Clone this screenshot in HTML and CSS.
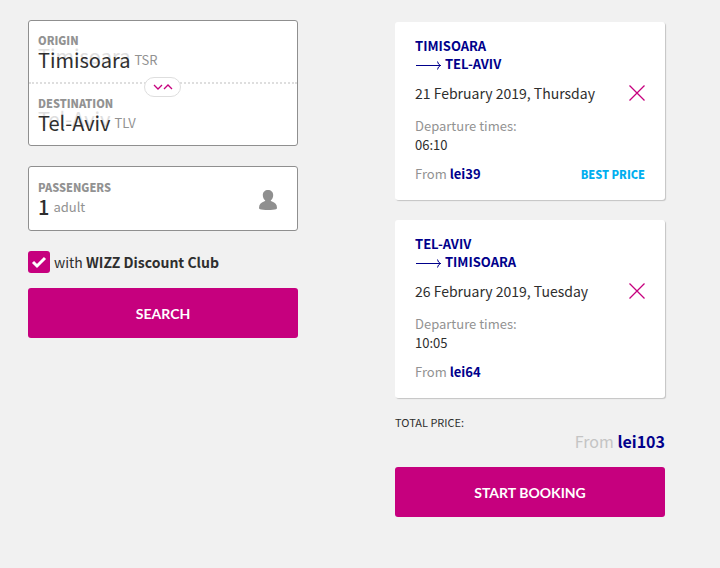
FILE: index.html
```html
<!DOCTYPE html>
<html lang="en">
<head>
<meta charset="utf-8">
<meta name="viewport" content="width=device-width, initial-scale=1">
<title>Flight search</title>
<link rel="stylesheet" href="styles.css">
</head>
<body>
<main class="page">
  <form class="search">
    <div class="panel route">
      <div class="field">
        <label class="label" for="origin">Origin</label>
        <div class="value-row">
          <span class="hint" aria-hidden="true">Timisoara</span>
          <input class="value" id="origin" type="text" value="Timisoara" size="9">
          <span class="unit">TSR</span>
        </div>
      </div>
      <div class="field">
        <label class="label" for="destination">Destination</label>
        <div class="value-row">
          <span class="hint" aria-hidden="true">Tel-Aviv</span>
          <input class="value" id="destination" type="text" value="Tel-Aviv" size="8">
          <span class="unit">TLV</span>
        </div>
      </div>
      <button class="swap" type="button" aria-label="Swap origin and destination">
        <svg width="20" height="8" viewBox="0 0 20 8"><path d="M1 2l4 4 4-4M11 6l4-4 4 4"/></svg>
      </button>
    </div>

    <div class="panel passengers">
      <div>
        <label class="label" for="passengers">Passengers</label>
        <div class="value-row">
          <input class="value count" id="passengers" type="text" value="1" size="1">
          <span class="unit">adult</span>
        </div>
      </div>
      <svg class="person" width="18" height="20" viewBox="0 0 18 20"><path d="M9 0c3 0 5.200 2 5.200 5 0 2.400-1 4.300-2.400 5.300 0 .7.400 1 1.200 1.300 3 1 5 2.900 5 6.400 0 .7-.3 1.100-1 1.300-2.400.9-13.600.9-16 0-.7-.2-1-.6-1-1.300 0-3.500 2-5.400 5-6.400.8-.3 1.200-.6 1.200-1.300C4.800 9.300 3.800 7.400 3.800 5c0-3 2.200-5 5.200-5z"/></svg>
    </div>

    <label class="club">
      <input class="check" type="checkbox" checked>
      <svg class="tick" width="22" height="22" viewBox="0 0 22 22"><path d="M5 11l4 4 8-8"/></svg>
      <span>with <b>WIZZ Discount Club</b></span>
    </label>

    <button class="action" type="submit">SEARCH</button>
  </form>

  <section class="summary">
    <article class="card">
      <h2 class="cities">TIMISOARA<br><svg class="arrow" width="26" height="10" viewBox="0 0 26 10"><path d="M1 5.500h25M22.500 1.500q.5 3 3 4q-2.500 1-3 4"/></svg> TEL-AVIV</h2>
      <div class="date-row">
        <span>21 February 2019, Thursday</span>
        <button class="remove" type="button" aria-label="Remove outbound flight"><svg width="16" height="16" viewBox="0 0 16 16"><path d="M.5.500l15 15M15.500.500l-15 15"/></svg></button>
      </div>
      <dl class="times"><dt>Departure times:</dt><dd>06:10</dd></dl>
      <div class="price-row">
        <span class="price">From <b>lei39</b></span>
        <span class="best">BEST PRICE</span>
      </div>
    </article>

    <article class="card">
      <h2 class="cities">TEL-AVIV<br><svg class="arrow" width="26" height="10" viewBox="0 0 26 10"><path d="M1 5.500h25M22.500 1.500q.5 3 3 4q-2.500 1-3 4"/></svg> TIMISOARA</h2>
      <div class="date-row">
        <span>26 February 2019, Tuesday</span>
        <button class="remove" type="button" aria-label="Remove return flight"><svg width="16" height="16" viewBox="0 0 16 16"><path d="M.5.500l15 15M15.500.500l-15 15"/></svg></button>
      </div>
      <dl class="times"><dt>Departure times:</dt><dd>10:05</dd></dl>
      <div class="price-row">
        <span class="price">From <b>lei64</b></span>
      </div>
    </article>

    <div class="total">
      <div class="total-label">TOTAL PRICE:</div>
      <div class="total-price">From <b>lei103</b></div>
    </div>
    <button class="action" type="button">START BOOKING</button>
  </section>
</main>
</body>
</html>
```
FILE: styles.css
```css
* { box-sizing: border-box; }

body {
  margin: 0;
  background: #f1f1f1;
  color: #2e2e2e;
  font-family: "Noto Sans CJK JP", "Noto Sans", sans-serif;
  font-size: 13px;
}

button, input { font: inherit; color: inherit; margin: 0; padding: 0; border: 0; background: none; }
button { cursor: pointer; }

.page {
  display: grid;
  grid-template-columns: 1fr 1fr;
  column-gap: 97px;
  align-items: start;
  padding: 20px 55px 20px 28px;
}

.search { display: flex; flex-direction: column; }

.panel {
  position: relative;
  margin-bottom: 20px;
  background: #fff;
  border: 1px solid #8f8f8f;
  border-radius: 3px;
}

.field { padding: 11px 9px 8px; }
.field + .field { border-top: 2px dotted #dedede; }

.label {
  display: block;
  color: #929292;
  font-size: 11px;
  font-weight: 900;
  line-height: 16px;
  text-transform: uppercase;
}

.value-row { position: relative; display: flex; align-items: flex-start; gap: 4px; height: 26px; }
.value { position: relative; field-sizing: content; font-size: 20px; line-height: 24px; height: 24px; }
.hint { position: absolute; left: 0; top: -3px; color: #dedede; font-size: 20px; line-height: 22px; }
.unit { color: #929292; font-size: 13px; line-height: 24px; }

.swap {
  position: absolute;
  left: 50%;
  top: 56px;
  display: flex;
  align-items: center;
  justify-content: center;
  width: 37px;
  height: 20px;
  margin-left: -19px;
  background: #fff;
  border: 1px solid #dedede;
  border-radius: 10px;
}
.swap path, .remove path { fill: none; stroke: #c6007e; stroke-width: 1.300; }

.passengers {
  display: flex;
  align-items: center;
  justify-content: space-between;
  padding: 12px 20px 9px 9px;
}
.count { font-weight: 500; }
.person { fill: #8f8f8f; }

.club {
  position: relative;
  display: flex;
  align-items: center;
  gap: 4px;
  margin-bottom: 15px;
  font-size: 14px;
  line-height: 22px;
}
.check { appearance: none; width: 22px; height: 22px; border-radius: 3px; background: #c6007e; }
.tick { position: absolute; left: 0; top: 0; fill: none; stroke: #fff; stroke-width: 3; }

.action {
  width: 100%;
  height: 50px;
  border-radius: 3px;
  background: #c6007e;
  color: #fff;
  font-family: Lato, sans-serif;
  font-size: 14px;
  font-weight: 700;
}

.summary { padding-top: 2px; }

.card {
  margin-bottom: 20px;
  padding: 15px 20px 16px;
  background: #fff;
  border-radius: 3px;
  box-shadow: 1px 1px 1px #c4c4c4;
}
.cities { margin: 0 0 8px; color: #00008b; font-size: 13px; font-weight: 700; line-height: 18px; }
.arrow { margin-right: 1px; vertical-align: -1px; fill: none; stroke: #00008b; }
.date-row { display: flex; align-items: center; justify-content: space-between; margin-bottom: 11px; font-size: 14px; line-height: 24px; }
.remove { display: flex; }
.times { margin: 0 0 10px; line-height: 19px; }
.times dt { color: #929292; }
.times dd { margin: 0; }
.price-row { display: flex; justify-content: space-between; line-height: 20px; }
.price { color: #929292; }
.price b, .total-price b { color: #00008b; }
.best { color: #00aeef; font-size: 11px; font-weight: 900; }

.total { margin: -4px 0 15px; }
.total-label { font-size: 11px; line-height: 16px; }
.total-price { color: #c4c4c4; font-size: 16px; line-height: 22px; text-align: right; }
```
